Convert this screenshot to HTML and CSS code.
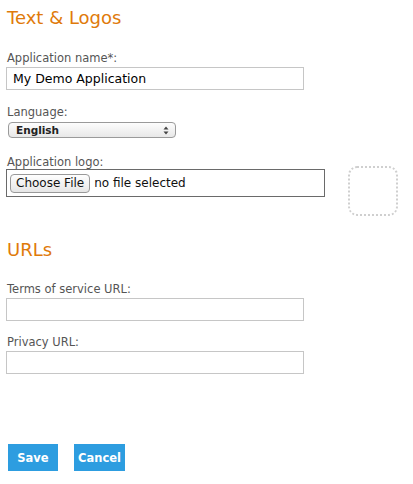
FILE: index.html
```html
<!DOCTYPE html>
<html>
<head>
<meta charset="utf-8">
<link rel="stylesheet" href="styles.css">
</head>
<body>
<div class="page">
  <h2 class="heading">Text &amp; Logos</h2>
  <div class="field">
    <label class="label">Application name*:</label>
    <div class="textbox">My Demo Application</div>
  </div>
  <div class="field lang">
    <label class="label">Language:</label>
    <div class="select"><span>English</span>
      <svg class="arrows" width="6" height="9" viewBox="0 0 6 9"><path d="M3 0.5 L5.5 3.5 H0.5 Z M3 8.5 L5.5 5.5 H0.5 Z" fill="#444"/></svg>
    </div>
  </div>
  <div class="field logo-row">
    <div class="logo-main">
      <label class="label">Application logo:</label>
      <div class="filebox"><span class="filebtn">Choose File</span><span class="filetext">no file selected</span></div>
    </div>
    <div class="logo-drop"></div>
  </div>

  <h2 class="heading urls">URLs</h2>
  <div class="field">
    <label class="label">Terms of service URL:</label>
    <div class="textbox"></div>
  </div>
  <div class="field">
    <label class="label">Privacy URL:</label>
    <div class="textbox"></div>
  </div>

  <div class="actions">
    <span class="btn save">Save</span>
    <span class="btn cancel">Cancel</span>
  </div>
</div>
</body>
</html>
```
FILE: styles.css
```css
html, body { margin: 0; padding: 0; background: #fff; }
body { font-family: "DejaVu Sans", Verdana, sans-serif; }
.page { padding: 6px 0 0 6px; }
.heading {
  margin: 0 0 0 1px;
  font-size: 18px;
  font-weight: normal;
  color: #df7a0a;
  line-height: 24px;
}
.label {
  display: block;
  font-size: 11.5px;
  color: #555;
  line-height: 14px;
  margin-left: 1px;
}
.heading + .field { margin-top: 21px; }
.textbox {
  box-sizing: border-box;
  width: 298px;
  height: 23px;
  margin-top: 2px;
  border: 1px solid #c6c6c6;
  font-size: 12.5px;
  line-height: 21px;
  padding-left: 6px;
  color: #000;
}
.field + .field { margin-top: 14px; }
.field.lang { margin-top: 15px; }
.select {
  box-sizing: border-box;
  width: 168px;
  height: 16px;
  margin: 3px 0 0 2px;
  border: 1px solid #9a9a9a;
  border-radius: 4px;
  background: linear-gradient(#fdfdfd, #e8e8e8);
  display: flex;
  align-items: center;
  justify-content: space-between;
  padding: 0 6px 0 7px;
  font-size: 10.5px;
  font-weight: bold;
  color: #222;
}
.arrows { display: block; }
.logo-row { display: flex; align-items: flex-start; }
.field.logo-row { margin-top: 17px; }
.filebox {
  box-sizing: border-box;
  width: 319px;
  height: 28px;
  margin-top: 0;
  border: 1px solid #6a6a6a;
  display: flex;
  align-items: center;
  padding-left: 3px;
  gap: 4px;
}
.filebtn {
  box-sizing: border-box;
  height: 19px;
  padding: 0 5px;
  border: 1px solid #999;
  border-radius: 4px;
  background: linear-gradient(#fefefe, #e6e6e6);
  font-size: 12px;
  line-height: 17px;
  color: #111;
}
.filetext { font-size: 12px; color: #111; }
.logo-drop {
  box-sizing: border-box;
  width: 50px;
  height: 50px;
  margin: 11px 0 0 23px;
  border: 2px dotted #cfcfcf;
  border-radius: 9px;
}
.heading.urls { margin-top: 22px; }
.heading.urls + .field { margin-top: 20px; }
.actions { display: flex; gap: 16px; margin: 70px 0 0 2px; }
.btn {
  display: flex;
  align-items: center;
  justify-content: center;
  height: 27px;
  background: #2d9de0;
  color: #fff;
  font-weight: bold;
  font-size: 11.5px;
}
.btn.save { width: 50px; }
.btn.cancel { width: 51px; }
```
